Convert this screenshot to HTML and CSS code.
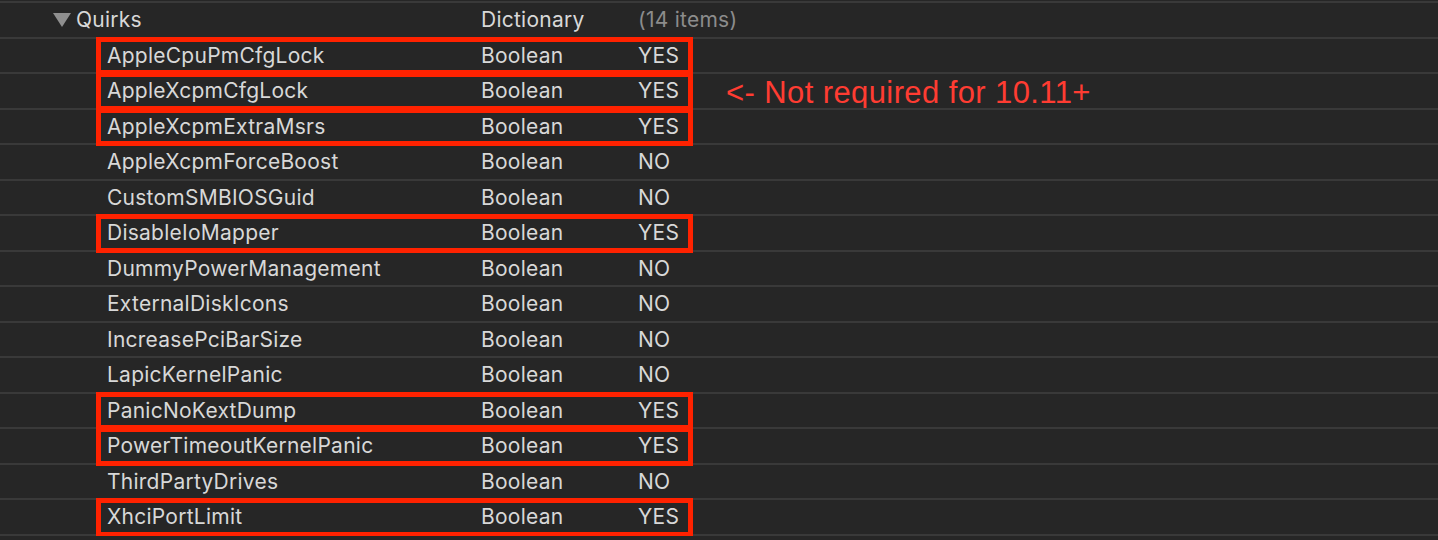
FILE: index.html
```html
<!DOCTYPE html>
<html>
<head>
<meta charset="utf-8">
<link rel="stylesheet" href="styles.css">
</head>
<body>
<div class="plist">
  <div class="row parent">
    <div class="key"><svg class="disclosure" width="18" height="14" viewBox="0 0 18 14"><polygon points="0,0 18,0 9,14" /></svg><span>Quirks</span></div>
    <div class="type">Dictionary</div>
    <div class="value dim">(14 items)</div>
  </div>
  <div class="row marked"><div class="key child">AppleCpuPmCfgLock</div><div class="type">Boolean</div><div class="value">YES</div></div>
  <div class="row marked"><div class="key child">AppleXcpmCfgLock</div><div class="type">Boolean</div><div class="value">YES</div><div class="note">&lt;- Not required for 10.11+</div></div>
  <div class="row marked"><div class="key child">AppleXcpmExtraMsrs</div><div class="type">Boolean</div><div class="value">YES</div></div>
  <div class="row"><div class="key child">AppleXcpmForceBoost</div><div class="type">Boolean</div><div class="value">NO</div></div>
  <div class="row"><div class="key child">CustomSMBIOSGuid</div><div class="type">Boolean</div><div class="value">NO</div></div>
  <div class="row marked"><div class="key child">DisableIoMapper</div><div class="type">Boolean</div><div class="value">YES</div></div>
  <div class="row"><div class="key child">DummyPowerManagement</div><div class="type">Boolean</div><div class="value">NO</div></div>
  <div class="row"><div class="key child">ExternalDiskIcons</div><div class="type">Boolean</div><div class="value">NO</div></div>
  <div class="row"><div class="key child">IncreasePciBarSize</div><div class="type">Boolean</div><div class="value">NO</div></div>
  <div class="row"><div class="key child">LapicKernelPanic</div><div class="type">Boolean</div><div class="value">NO</div></div>
  <div class="row marked"><div class="key child">PanicNoKextDump</div><div class="type">Boolean</div><div class="value">YES</div></div>
  <div class="row marked"><div class="key child">PowerTimeoutKernelPanic</div><div class="type">Boolean</div><div class="value">YES</div></div>
  <div class="row"><div class="key child">ThirdPartyDrives</div><div class="type">Boolean</div><div class="value">NO</div></div>
  <div class="row marked"><div class="key child">XhciPortLimit</div><div class="type">Boolean</div><div class="value">YES</div></div>
</div>
</body>
</html>
```

FILE: styles.css
```css
html, body {
  margin: 0;
  padding: 0;
  background: #262626;
  overflow: hidden;
}

.plist {
  padding-top: 1px;
  border-bottom: 2px solid #393939;
  font-family: Inter, "Noto Sans", sans-serif;
  font-size: 21px;
  letter-spacing: 0.25px;
  line-height: 24px;
  color: #d8d8d8;
}

.row {
  position: relative;
  box-sizing: border-box;
  height: 36px;
  border-top: 2px solid #393939;
  display: grid;
  grid-template-columns: 481px 157px 88px 1fr;
  grid-template-rows: 100%;
  align-items: center;
  white-space: nowrap;
}

.row:nth-child(even) {
  height: 35px;
}

.key {
  display: flex;
  align-items: center;
}

.parent .key {
  padding-left: 53px;
}

.disclosure {
  fill: #8f8f8f;
  margin-right: 5px;
}

.child {
  padding-left: 107px;
}

.dim {
  color: #8c8c8c;
}

.note {
  color: #ff3c32;
  font-family: "Liberation Sans", Arial, sans-serif;
  font-size: 31px;
  line-height: 28px;
  letter-spacing: 0.4px;
  padding-top: 3px;
}

.marked::after {
  content: "";
  position: absolute;
  z-index: 1;
  left: 96px;
  top: -2px;
  width: 597px;
  height: calc(100% + 5px);
  box-sizing: border-box;
  border: 5px solid #ff2200;
  pointer-events: none;
}
```
